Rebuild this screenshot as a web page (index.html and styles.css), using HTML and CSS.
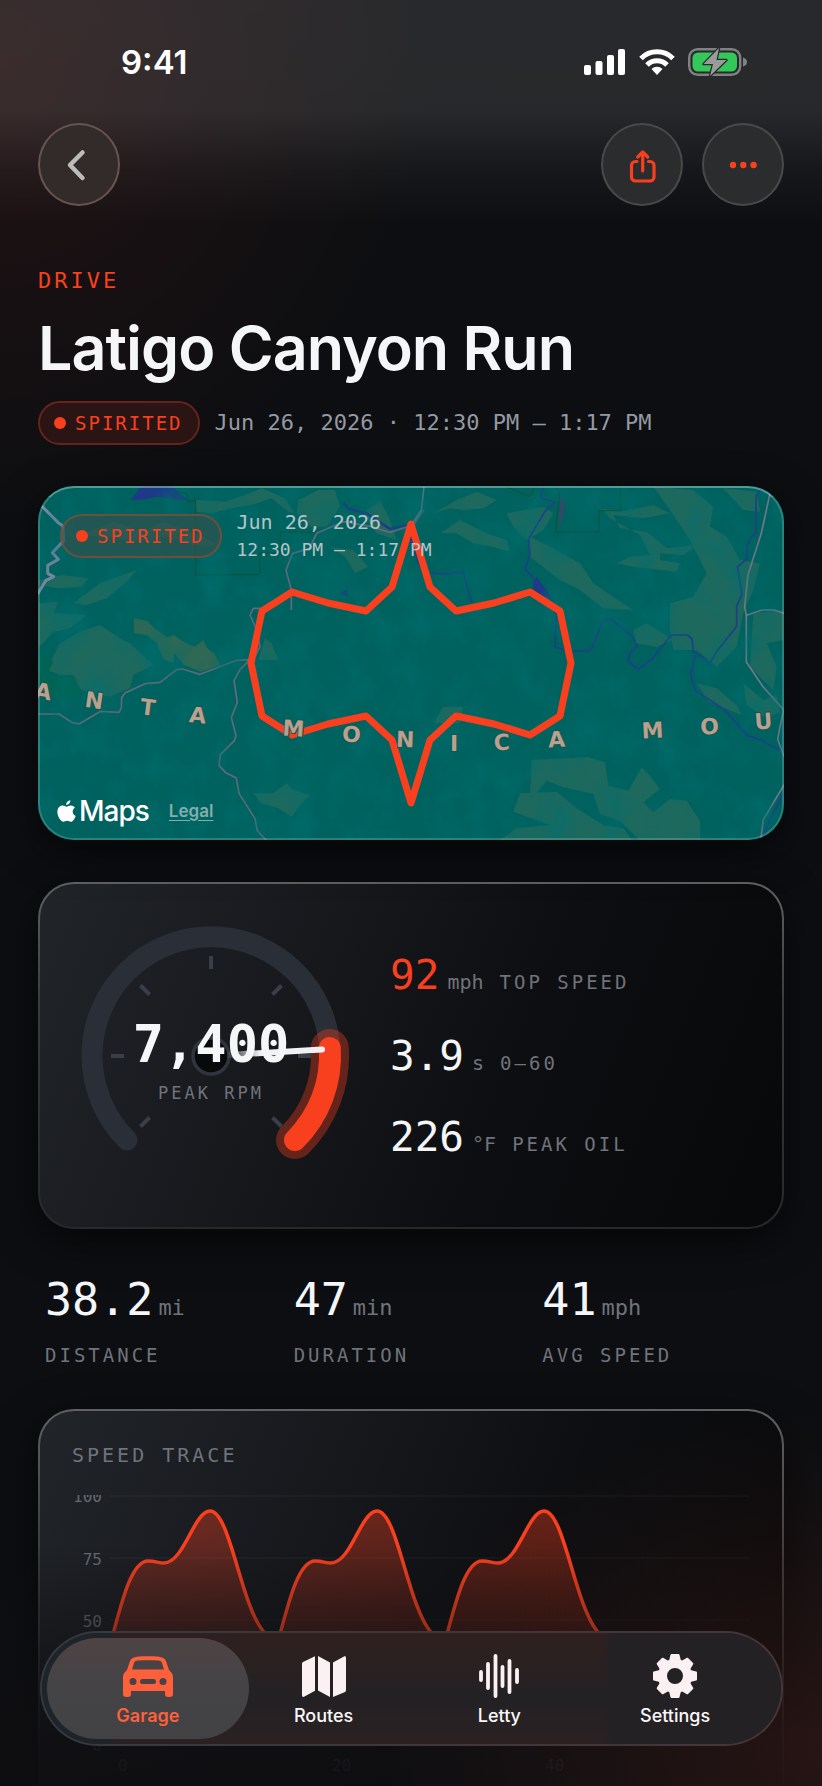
FILE: index.html
```html
<!DOCTYPE html>
<html lang="en">
<head>
<meta charset="utf-8">
<meta name="viewport" content="width=device-width, initial-scale=1">
<title>Latigo Canyon Run</title>
<link rel="stylesheet" href="styles.css">
</head>
<body>
<div class="screen">
  <header class="top">
    <div class="status">
      <span class="clock">9:41</span>
      <div class="status-icons">
        <svg width="42" height="28" viewBox="0 0 42 28" fill="#fff" aria-hidden="true"><rect x="0" y="17" width="7" height="10" rx="2"/><rect x="11.500" y="13" width="7" height="14" rx="2"/><rect x="23" y="7" width="7" height="20" rx="2"/><rect x="34" y="1" width="7" height="26" rx="2"/></svg>
        <svg width="36" height="28" viewBox="0 0 36 28" fill="none" stroke="#fff" stroke-width="5" aria-hidden="true"><path d="M2 10.500a22.500 22.500 0 0 1 32 0"/><path d="M8 17a14 14 0 0 1 20 0"/><path d="M18 27l-5.500-6a8 8 0 0 1 11 0z" fill="#fff" stroke="none"/></svg>
        <svg width="59" height="28" viewBox="0 0 59 28" aria-hidden="true"><rect x="1.200" y="1.200" width="51" height="25.600" rx="8.500" fill="none" stroke="#808182" stroke-width="2.400"/><rect x="4.500" y="4.500" width="44.500" height="19" rx="5.500" fill="#34c759"/><path d="M55 9.500c3 1 4 2.500 4 4.500s-1 3.500-4 4.500z" fill="#808182"/><path d="M31 0L15.500 16h9.500L22 28 38.500 12h-10z" fill="#9b9b9b" stroke="#292a2b" stroke-width="2.500" stroke-linejoin="round" paint-order="stroke"/></svg>
      </div>
    </div>
    <nav class="toolbar" aria-label="Page actions">
      <button class="round back" aria-label="Back"><svg width="82" height="82" viewBox="0 0 82 82" fill="none" stroke="#bdbcbc" stroke-width="4.500" stroke-linecap="round" stroke-linejoin="round"><path d="M44.500 28.500L32 41l12.500 13"/></svg></button>
      <div class="actions">
        <button class="round" aria-label="Share"><svg width="82" height="82" viewBox="0 0 82 82" fill="none" stroke="#f8401f" stroke-width="3.200" stroke-linecap="round" stroke-linejoin="round"><path d="M36 37.500h-1.500a4 4 0 0 0-4 4v11.500a4 4 0 0 0 4 4h14.500a4 4 0 0 0 4-4V41.500a4 4 0 0 0-4-4h-1.500M41.700 47V28.500M36.700 33l5-5 5 5"/></svg></button>
        <button class="round" aria-label="More"><svg width="82" height="82" viewBox="0 0 82 82" fill="#f8401f"><circle cx="31" cy="41" r="3.200"/><circle cx="41.300" cy="41" r="3.200"/><circle cx="51.600" cy="41" r="3.200"/></svg></button>
      </div>
    </nav>
  </header>

  <main class="content">
    <p class="eyebrow">DRIVE</p>
    <h1 class="title">Latigo Canyon Run</h1>
    <div class="meta">
      <span class="pill">SPIRITED</span>
      <span class="when">Jun 26, 2026 · 12:30 PM – 1:17 PM</span>
    </div>

    <section class="map" aria-label="Route map">
      <svg class="map-art" viewBox="38 486 746 354" preserveAspectRatio="xMidYMid slice" aria-hidden="true">
        <defs>
          <filter id="terrain" x="0" y="0" width="100%" height="100%">
            <feTurbulence type="fractalNoise" baseFrequency="0.035 0.025" numOctaves="3" seed="8"/>
            <feColorMatrix values="0 0 0 0 0  0 0 0 0 0.160  0 0 0 0 0.160  1.600 0 0 0 -0.650"/>
          </filter>
        </defs>
        <rect x="38" y="486" width="746" height="354" fill="#00625f"/>
        <g transform="translate(20 470) scale(.33333)">
          <g fill="#1e695e">
            <path d="M525 90l90 5 60-20 50-20 70 30 30 45-20-5-50-40-60 20-60 10-60 15-45-5z"/>
            <path d="M835 90l60-30 50 0 15 50-40 60-50 0-40-40z"/>
            <path d="M1030 130l50-40 30 60 20 60-60-20z"/>
            <path d="M180 195l100-40 90 30 60-30 120 45 50 30-80-5-80-25-80 15-80-10z"/>
            <path d="M930 230l70 10 45 50-40 20-30-50z"/>
            <path d="M55 330l70-15 80 10-20 25-70 5-60-10z"/>
            <path d="M160 400l80-60 110-40-30 35-60 50-60 20z"/>
            <path d="M55 400l60-5-15 35 100 5-50 40-50 10-45 50z"/>
            <path d="M80 600l40-80 60-35 60-20 60 40 30 15 70 65-60 30-10 40-60 25-60-10-70-30-30-30z"/>
            <path d="M735 505l20 15 20 50-60 0z"/>
            <path d="M700 970l60 0 40-30 20 20 50 15-30 30-25 35-40-25-50-15z"/>
          </g>
          <path d="M342 445l40 8 20 20 40 30 18-8 30 20 20 10 15 5 25-20 12 25 20 15 20 35-60 20-50-20-30-35-2 30-30-12-20-48-30-25-38-5z" fill="#2f6854"/>
          <path d="M55 535l45 40-20 40 80 0 30 60-60 15-75-25z" fill="#006455"/>
          <path d="M332 90l30-40 90-5 50 45-60-5-30-5-50 10z" fill="#1e3a87"/>
          <path d="M970 98l15 18 55 14 70 47 50-12M1170 200l20 60 12 30M965 374l14-12M968 366l14 10" fill="none" stroke="#1f3a88" stroke-width="7"/>
          <path d="M478 66l22 4 5 28 22-8v224h192v-64h62v-64h110" fill="none" stroke="#0e5134" stroke-width="3"/>
          <g fill="none" stroke="#626a7b" stroke-width="5" stroke-linejoin="round">
            <path d="M1210 120l-30 45-70 22-60-18-80-14-80 35-22 45-50 15-20 50 16 60v60M725 415l-25 0-10 20 20 45 10 50-15 30M55 732l62 0 40 26 20 4 65-38 55 3 7-14 1-30 10-14 60-28 45-4 50-38 18-2 52 16 110-42 40-2 0 0-30 30-18 32 10 66-18 46 14 54-5 15-42 42-4 32 20 22 32 16 8 46 48 76 7 36 50 54"/>
          </g>
          <path d="M62 105l55 55 12 8 2 44-34 36 18 20-32 18 0 24 18 10-24 12-24 40" fill="none" stroke="#7387a0" stroke-width="9" stroke-linejoin="round"/>
        </g>
        <g transform="translate(400 470) scale(.33333)">
          <g fill="#1e695e">
            <path d="M100 130l70-40 60-25 60 25-40 25-60 5-40-5z"/>
            <path d="M320 130l110-20 30 20-30 50-50 30-40-40z"/>
            <path d="M120 190l60-40 80 40 60 20 10 35-50-15-60-10-50-30z"/>
            <path d="M390 200l60 30 90 50 40 60 60 40 60 40-90-5-70-55-60-30-90-70z"/>
            <path d="M560 65l40 50 60 10 100-20 50 25-80 15-90-10 20 40 80 10 60 50 90-10-40 30-70-5 0 20 60 10-10 25-130-15-50-10 40-20 60-5-30-60-90-50z"/>
            <path d="M760 50l120 10 60 50-10 60 50 30 40 70 60 10-20 80-30 70-20 100-60 60-60-50-70 0-10-60 0-80 70-20 40-70-50-100-60-90z"/>
            <path d="M970 55l100 10 10 60-50-5z"/>
            <path d="M1060 430l90-10 0 90-50 10 30 70-10 70-70-70z"/>
            <path d="M700 480l40-20 80 50-50 20-60-10z"/>
            <path d="M890 640l60 15 60 50 15 30-100-40z"/>
            <path d="M1030 640l60 50 40-15 10 50-40 20-60-40z"/>
            <path d="M130 710l60 0-10 50-80 0z"/>
            <path d="M395 870l170-8 50 15 10 70 60 15 40-70 20 20 35 45-50 40 30 30 50-40 50 5 40 60 0 60-180 0-60-60-60-20-20-60-90-20-50-20-50 60z"/>
            <path d="M300 1110l50-35 100-10-110-40 20-55 110-5 60 50 80 50 60 10 30 40-60 0z"/>
          </g>
          <path d="M480 70l16 30-12 60-8 0z" fill="#304a68"/>
          <path d="M400 335l10-15 50 70-60-25z" fill="#1e3a87"/>
          <path d="M320 50l70 30 15-30M465 50l14 18-12 118h130v-64h64V50" fill="none" stroke="#0e5134" stroke-width="3"/>
          <g fill="none" stroke="#1d3f8a" stroke-width="5" stroke-linejoin="round">
            <path d="M430 50l-10 34 45 12-30 28-50 84 5 44-14 44 34 40 50 60 10 20-5 115 50 14 56-4 15-30 14-38 14-26 24 4 58 48 16 30-22 20-6 24 30 26 44-34 56-70 48 0 14 12 4 38 34 20 14 18 20-36 62-78 0-60 16-36-14-82 28-24 0-36 10-26 18-16 0-110 20-30M90 308l50 4 50-6 24 90M886 555l-14 60 14 46 90 60 66 76 40 12 40 24 22 6M1090 1110l14-50 46-90"/>
          </g>
          <g fill="none" stroke="#707789" stroke-width="5" stroke-linejoin="round">
            <path d="M72 50l-8 70-30 45M1110 70l-26 120-40 124-10 96 5 26v140l50 74 62 70-12 56-6 32 20 54M1040 436l46-16h36l30 10M1152 945l-62 104-8 60"/>
          </g>
        </g>
        <rect x="38" y="486" width="746" height="354" filter="url(#terrain)" opacity=".8"/>
        <path class="route" d="M411 524l19 63 26 24 38-8 36-11 30 19 11 52-11 53-30 19-36-11-38-8-26 24-19 63-19-63-26-24-38 8-36 11-30-19-11-53 11-52 30-19 36 11 38 8 26-24z"/>
        <g class="range">
          <text transform="translate(42 699) rotate(9)">A</text>
          <text transform="translate(93 708) rotate(8)">N</text>
          <text transform="translate(147 715) rotate(7)">T</text>
          <text transform="translate(197 723) rotate(6)">A</text>
          <text transform="translate(293 736) rotate(4)">M</text>
          <text transform="translate(351 742) rotate(3)">O</text>
          <text transform="translate(405 747) rotate(2)">N</text>
          <text transform="translate(454 751)">I</text>
          <text transform="translate(502 750) rotate(-2)">C</text>
          <text transform="translate(557 747) rotate(-3)">A</text>
          <text transform="translate(653 738) rotate(-3)">M</text>
          <text transform="translate(710 734) rotate(-4)">O</text>
          <text transform="translate(764 729) rotate(-4)">U</text>
        </g>
      </svg>
      <div class="map-head">
        <span class="pill pill-glass">SPIRITED</span>
        <p class="map-when"><span class="day">Jun 26, 2026</span><span>12:30 PM – 1:17 PM</span></p>
      </div>
      <div class="map-foot">
        <span class="brand"><svg width="19" height="23" viewBox="0 0 19 23" fill="#fff" aria-hidden="true"><path d="M13.300.2c.2 2.600-1.900 4.700-4.100 4.700C9 2.600 11.100.5 13.300.2zM9.800 6.700c.9 0 2.200-1.100 4-1.100 1.700 0 3.200.9 4.100 2.200-3.300 2-2.800 6.700.8 8.100-.7 2-2.700 5.800-4.900 5.800-1.400 0-1.900-.9-3.700-.9s-2.400.9-3.700.9C3.700 21.700.4 16.600.4 12c0-4.200 2.600-6.400 5.200-6.400 1.900 0 3.200 1.100 4.200 1.100z"/></svg>Maps</span>
        <a class="legal" href="#legal">Legal</a>
      </div>
    </section>

    <section class="card summary" aria-label="Drive summary">
      <svg class="gauge" viewBox="72 916 278 278" role="img" aria-label="Peak 7,400 RPM">
        <defs>
          <linearGradient id="needle" gradientUnits="userSpaceOnUse" x1="226" y1="0" x2="260" y2="0"><stop offset="0" stop-color="#f4f5f7" stop-opacity="0"/><stop offset="1" stop-color="#f1f1f3"/></linearGradient>
        </defs>
        <path d="M127 1139A119 119 0 1 1 295 1139" fill="none" stroke="#2a2e37" stroke-width="21" stroke-linecap="round"/>
        <g stroke="#3a3e49" stroke-width="4">
          <path d="M211 955v13M111 1055h13M298 1055h13M140.500 984.500l9 9M281.500 984.500l-9 9M140.500 1125.500l9-9M281.500 1125.500l-9-9"/>
        </g>
        <path d="M329.800 1047A119 119 0 0 1 295 1139" fill="none" stroke="#f8401f" stroke-opacity=".36" stroke-width="38" stroke-linecap="round"/>
        <path d="M329.800 1047A119 119 0 0 1 295 1139" fill="none" stroke="#f8401f" stroke-width="22" stroke-linecap="round"/>
        <circle cx="211" cy="1055" r="18" fill="#08090b" stroke="#30343d" stroke-width="3.500"/>
        <path d="M226 1054L322 1048.500" stroke="url(#needle)" stroke-width="6" stroke-linecap="round"/>
        <text class="rpm" x="211" y="1061">7,400</text>
        <text class="rpm-label" x="211" y="1098">PEAK RPM</text>
      </svg>
      <dl class="facts">
        <div class="fact"><dd class="hot">92</dd><dd class="unit">mph</dd><dt>TOP SPEED</dt></div>
        <div class="fact"><dd>3.9</dd><dd class="unit">s</dd><dt>0–60</dt></div>
        <div class="fact"><dd>226</dd><dd class="unit">°F</dd><dt>PEAK OIL</dt></div>
      </dl>
    </section>

    <dl class="totals">
      <div class="total"><dd>38.2<span>mi</span></dd><dt>DISTANCE</dt></div>
      <div class="total"><dd>47<span>min</span></dd><dt>DURATION</dt></div>
      <div class="total"><dd>41<span>mph</span></dd><dt>AVG SPEED</dt></div>
    </dl>

    <section class="card trace">
      <h2>SPEED TRACE</h2>
      <svg class="chart" viewBox="72 1495 678 300" role="img" aria-label="Speed over time">
        <defs>
          <linearGradient id="area" gradientUnits="userSpaceOnUse" x1="0" y1="1510" x2="0" y2="1745"><stop offset="0" stop-color="#f8401f" stop-opacity=".38"/><stop offset="1" stop-color="#f8401f" stop-opacity=".02"/></linearGradient>
        </defs>
        <path d="M110 1496h640M110 1558h640M110 1620h640M110 1683h640M110 1745h640" stroke="#fff" stroke-opacity=".06" stroke-width="1"/>
        <path d="M110 1745V1645C120 1610 130 1561 148 1561C156 1561 158 1563 164 1563C184 1563 194 1511 210 1511C230 1511 240 1602 263 1631L270 1640L277 1645C287 1610 297 1561 315 1561C323 1561 325 1563 331 1563C351 1563 361 1511 377 1511C397 1511 407 1602 430 1631L437 1640L444 1645C454 1610 464 1561 482 1561C490 1561 492 1563 498 1563C518 1563 528 1511 544 1511C564 1511 574 1602 597 1631L607 1645V1745z" fill="url(#area)"/>
        <path d="M110 1645C120 1610 130 1561 148 1561C156 1561 158 1563 164 1563C184 1563 194 1511 210 1511C230 1511 240 1602 263 1631L270 1640L277 1645C287 1610 297 1561 315 1561C323 1561 325 1563 331 1563C351 1563 361 1511 377 1511C397 1511 407 1602 430 1631L437 1640L444 1645C454 1610 464 1561 482 1561C490 1561 492 1563 498 1563C518 1563 528 1511 544 1511C564 1511 574 1602 597 1631L607 1645" fill="none" stroke="#f8401f" stroke-width="3.500" stroke-linejoin="round"/>
        <g class="axis axis-y"><text x="102" y="1502">100</text><text x="102" y="1565">75</text><text x="102" y="1627">50</text><text x="102" y="1689">25</text><text x="102" y="1751">0</text></g>
        <g class="axis"><text x="118" y="1771">0</text><text x="332" y="1771">20</text><text x="545" y="1771">40</text></g>
      </svg>
    </section>
  </main>

  <div class="fade"></div>
  <nav class="tabs" aria-label="Main">
    <a class="tab active" href="#garage" aria-current="page">
      <svg width="50" height="44" viewBox="0 0 50 42" fill="#ff603c" aria-hidden="true"><path fill-rule="evenodd" d="M13 1C15 0 35 0 37 1c3 .5 5 1.500 6 4l3 9c3 3 4 4 4 8v16c0 2-1 3-3 3h-2c-2 0-3-1-3-3v-3H8v3c0 2-1 3-3 3H3c-2 0-3-1-3-3V22c0-4 1-5 4-8l3-9c1-2.500 3-3.500 6-4zM14.500 4.500c-2 .3-3 1-3.500 2.500L9 13.500h32L39 7c-.5-1.500-1.500-2.200-3.500-2.500-4-.5-17-.5-21 0zM10 22a3.500 3.500 0 1 0 0 7 3.500 3.500 0 0 0 0-7zm30 0a3.500 3.500 0 1 0 0 7 3.500 3.500 0 0 0 0-7zM19.500 23a2.500 2.500 0 0 0 0 5h11a2.500 2.500 0 0 0 0-5z"/></svg>
      <span>Garage</span>
    </a>
    <a class="tab" href="#routes">
      <svg width="44" height="44" viewBox="0 0 44 42" fill="#fbf1f3" aria-hidden="true"><path d="M0 8c0-1 .3-1.500 1-2L13 .2v34.600L2.500 40.500C1 41.300 0 41 0 39zM16 0l12 6.500V41l-12-6.500zM31 6.500L41.500.7C43 0 44 .2 44 2v32c0 1-.3 1.500-1 2L31 41z"/></svg>
      <span>Routes</span>
    </a>
    <a class="tab" href="#letty">
      <svg width="40" height="46" viewBox="0 0 40 46" fill="none" stroke="#fbf1f3" stroke-width="3.800" stroke-linecap="round" aria-hidden="true"><path d="M2 19v8M9 11v24M16.500 3v40M23.500 14v19M30.500 8v31M38 17v12"/></svg>
      <span>Letty</span>
    </a>
    <a class="tab" href="#settings">
      <svg width="46" height="46" viewBox="0 0 46 46" aria-hidden="true"><g fill="#fbf1f3" stroke="#fbf1f3" stroke-width="2" stroke-linejoin="round"><path d="M19.500 2h7l2 8h-11z"/><path d="M19.500 2h7l2 8h-11z" transform="rotate(45 23 23)"/><path d="M19.500 2h7l2 8h-11z" transform="rotate(90 23 23)"/><path d="M19.500 2h7l2 8h-11z" transform="rotate(135 23 23)"/><path d="M19.500 2h7l2 8h-11z" transform="rotate(180 23 23)"/><path d="M19.500 2h7l2 8h-11z" transform="rotate(225 23 23)"/><path d="M19.500 2h7l2 8h-11z" transform="rotate(270 23 23)"/><path d="M19.500 2h7l2 8h-11z" transform="rotate(315 23 23)"/></g><circle cx="23" cy="23" r="12.500" fill="none" stroke="#fbf1f3" stroke-width="9"/></svg>
      <span>Settings</span>
    </a>
  </nav>
</div>
</body>
</html>
```

FILE: styles.css
```css
:root {
  --accent: #f8401f;
  --text: #f5f6f8;
  --muted: #70737b;
  --mono: "DejaVu Sans Mono", monospace;
  --sans: Inter, "Liberation Sans", sans-serif;
}

* { box-sizing: border-box; }

body, p, h1, h2, dl, dd { margin: 0; }

body {
  background: #0c0e12;
  color: var(--text);
  font-family: var(--mono);
}

.screen {
  position: relative;
  height: 100vh;
  overflow: hidden;
  background:
    linear-gradient(rgba(255, 255, 255, .115) 0, rgba(255, 255, 255, .11) 110px, rgba(255, 255, 255, .04) 170px, transparent 225px),
    radial-gradient(ellipse 440px 480px at 0 60px, rgba(255, 60, 40, .09), transparent),
    #0c0e11;
}

.status {
  display: flex;
  align-items: center;
  justify-content: space-between;
  height: 123px;
  padding: 0 75px 0 121px;
}

.clock {
  font: 600 33px/40px var(--sans);
  color: #fff;
}

.status-icons {
  display: flex;
  align-items: center;
  gap: 13px;
}

.toolbar {
  display: flex;
  justify-content: space-between;
  padding: 0 38px;
}

.actions { display: flex; gap: 19px; }

.round {
  display: flex;
  align-items: center;
  justify-content: center;
  width: 82px;
  height: 83px;
  padding: 0;
  border: 2px solid #484949;
  border-radius: 50%;
  background: #2b2c2d;
}

.round svg { flex: none; }

.back {
  border-color: #675352;
  background: #332a2a;
}

.content {
  padding: 61px 38px 0;
}

.eyebrow {
  font-size: 22px;
  line-height: 28px;
  letter-spacing: 3px;
  color: var(--accent);
}

.title {
  margin-top: 17px;
  font: 600 61px/72px var(--sans);
  letter-spacing: -1px;
}

.meta {
  display: flex;
  align-items: center;
  gap: 15px;
  margin-top: 17px;
}

.pill {
  display: flex;
  align-items: center;
  gap: 9px;
  height: 44px;
  padding: 0 15px 0 14px;
  border: 2px solid #66231a;
  border-radius: 22px;
  background: #2a1514;
  color: var(--accent);
  font-size: 19px;
  letter-spacing: 2px;
}

.pill::before {
  content: "";
  width: 12px;
  height: 12px;
  border-radius: 50%;
  background: var(--accent);
}

.pill-glass {
  border-color: rgba(190, 70, 40, .5);
  background: rgba(50, 80, 75, .65);
}

.when {
  font-size: 22px;
  line-height: 28px;
  color: #9599a3;
  white-space: nowrap;
}

.map {
  position: relative;
  display: flex;
  flex-direction: column;
  justify-content: space-between;
  height: 354px;
  margin-top: 41px;
  overflow: hidden;
  border-radius: 36px;
  background: #00605d;
  box-shadow: 0 12px 40px rgba(0, 0, 0, .6);
}

.map::after {
  content: "";
  position: absolute;
  inset: 0;
  border: 2px solid rgba(160, 210, 205, .28);
  border-top-color: rgba(160, 210, 205, .5);
  border-radius: 36px;
  pointer-events: none;
}

.map-art {
  position: absolute;
  inset: 0;
  width: 100%;
  height: 100%;
}

.route {
  fill: none;
  stroke: #f8401f;
  stroke-width: 7;
  stroke-linejoin: round;
}

.range {
  fill: #b9a08f;
  stroke: #16564f;
  stroke-width: 2px;
  paint-order: stroke;
  font: bold 22px "DejaVu Sans", sans-serif;
  text-anchor: middle;
}

.map-head {
  position: relative;
  display: flex;
  align-items: center;
  gap: 15px;
  padding: 22px 22px;
}

.map-when {
  display: grid;
  font-size: 18px;
  line-height: 28px;
  color: #b4c3c8;
}

.day { font-size: 20px; }

.map-foot {
  position: relative;
  display: flex;
  align-items: center;
  gap: 20px;
  padding: 0 19px 12px;
}

.brand {
  display: flex;
  align-items: center;
  gap: 3px;
  font: 500 28px/34px var(--sans);
  letter-spacing: -1px;
  color: #fff;
}

.legal {
  font: 600 17px/20px var(--sans);
  color: #84aeab;
  text-underline-offset: 3px;
}

.card {
  border: 2px solid transparent;
  border-radius: 36px;
  background:
    linear-gradient(112deg, #212429 0, #15171b 38%, #0d0e11 62%, #070809 100%) padding-box,
    linear-gradient(#606163, #3a3b3e 35%, #27282b) border-box;
  box-shadow: 0 12px 40px rgba(0, 0, 0, .6);
}

.summary {
  display: flex;
  align-items: center;
  gap: 40px;
  margin-top: 42px;
  padding: 33px 32px 32px;
}

.gauge {
  flex: none;
  width: 278px;
  height: 278px;
}

.rpm {
  fill: var(--text);
  font: bold 52px var(--mono);
  text-anchor: middle;
}

.rpm-label {
  fill: var(--muted);
  font: 17px var(--mono);
  letter-spacing: 3px;
  text-anchor: middle;
}

.facts {
  display: grid;
  gap: 33px;
}

.fact {
  display: flex;
  align-items: baseline;
  line-height: 48px;
  font-size: 41px;
}

.hot { color: var(--accent); }

.fact .unit {
  margin: 0 16px 0 8px;
  font-size: 20px;
  line-height: 24px;
  color: var(--muted);
}

dt {
  font-size: 19px;
  line-height: 24px;
  letter-spacing: 3px;
  color: var(--muted);
}

.totals {
  display: grid;
  grid-template-columns: repeat(3, 1fr);
  margin-top: 44px;
}

.total { padding-left: 7px; }

.total dd {
  font-size: 45px;
  line-height: 54px;
}

.total dd span {
  margin-left: 5px;
  font-size: 22px;
  line-height: 24px;
  color: var(--muted);
}

.total dt { margin-top: 16px; }

.trace {
  margin-top: 42px;
  padding: 30px 32px;
}

.trace h2 {
  font: 20px/28px var(--mono);
  letter-spacing: 3px;
  color: var(--muted);
}

.chart {
  display: block;
  width: 100%;
  margin-top: 26px;
}

.axis {
  fill: #65686f;
  font: 16px var(--mono);
}

.axis-y { text-anchor: end; }

.fade {
  position: absolute;
  inset: auto 0 0;
  height: 400px;
  background:
    radial-gradient(ellipse 440px 340px at 100% 90%, rgba(255, 80, 40, .1), transparent),
    linear-gradient(transparent 40%, rgba(14, 14, 17, .35) 58%, rgba(14, 14, 17, .88) 88%, rgba(14, 14, 17, .92));
}

.tabs {
  position: absolute;
  inset: auto 39px 40px 40px;
  display: grid;
  grid-template-columns: repeat(4, 1fr);
  height: 115px;
  padding: 5px 18px;
  border: 2px solid transparent;
  border-radius: 58px;
  background:
    linear-gradient(90deg, #1e2429 9%, rgba(30, 36, 41, 0) 10%, rgba(30, 36, 41, 0) 76%, #242124 77%) padding-box,
    linear-gradient(#30201f, #232124 60%, #2b2122) padding-box,
    linear-gradient(100deg, #343a42, #463538) border-box;
}

.tab {
  display: flex;
  flex-direction: column;
  align-items: center;
  justify-content: flex-end;
  gap: 5px;
  padding-bottom: 11px;
  border-radius: 52px;
  color: #fbf6f7;
  font: 500 18px/24px var(--sans);
  text-decoration: none;
}

.tab svg { display: block; }

.tab.active {
  margin: 0 -13px;
  background: linear-gradient(#4e4344, #444346 50%, #424245);
  color: #ff603c;
  font-weight: 600;
}
```
